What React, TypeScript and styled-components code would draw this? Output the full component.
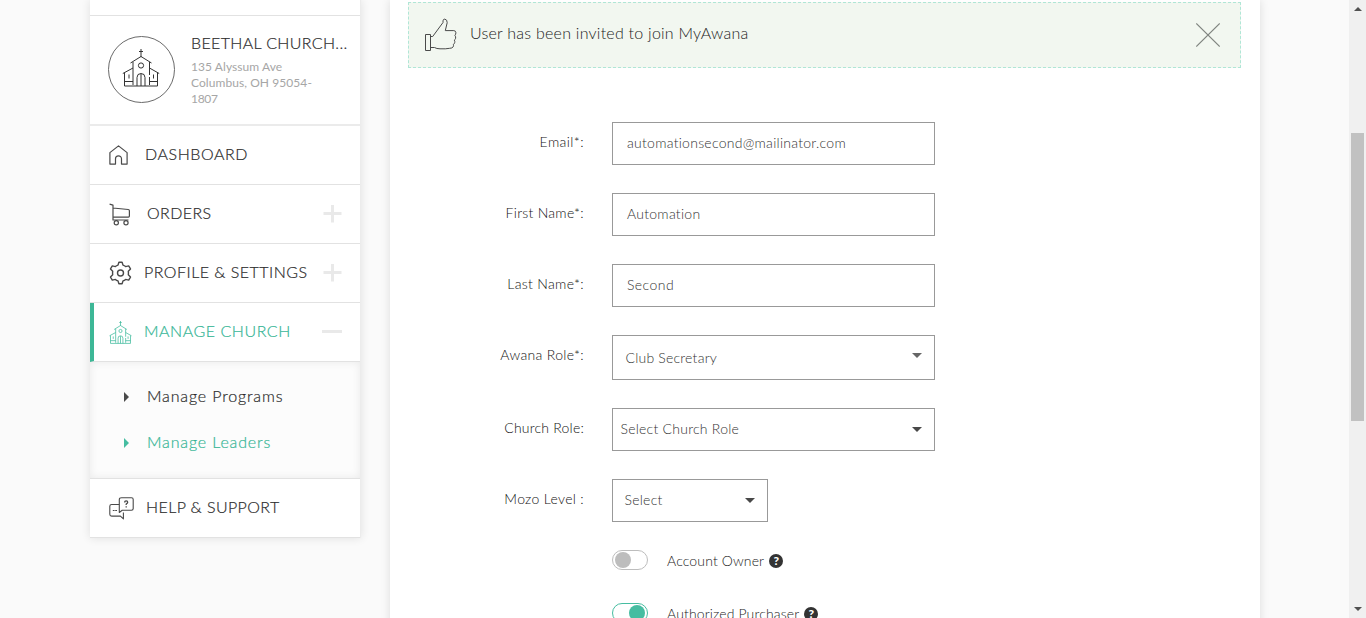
import React from "react";
import styled, { createGlobalStyle } from "styled-components";

const GREEN = "#3db796";
const GREEN_TEXT = "#46bda1";
const DARK = "#4a4a4a";
const INK = "#2c2c2c";

const GlobalStyle = createGlobalStyle`
  *, *::before, *::after { box-sizing: border-box; }
  html, body { margin: 0; padding: 0; overflow: hidden; }
  body { font-family: Lato, "Open Sans", sans-serif; font-weight: 300; background: #fafafa; }
`;

const Page = styled.div`
  display: flex;
  height: 618px;
  overflow: hidden;
  background: #fafafa;
`;

const Content = styled.div`
  flex: 1;
  display: flex;
  align-items: flex-start;
  gap: 29px;
  padding-left: 90px;
`;

const Sidebar = styled.aside`
  width: 271px;
  background: #fff;
  border-right: 1px solid #ececec;
  box-shadow: 0 0 9px rgba(0, 0, 0, 0.11);
`;

const SidebarTop = styled.div`
  height: 16px;
  border-bottom: 1px solid #e2e2e2;
`;

const ChurchCard = styled.div`
  display: flex;
  gap: 16px;
  height: 110px;
  padding: 20px 0 0 18px;
  border-bottom: 2px solid #ebebeb;
`;

const ChurchBadge = styled.div`
  display: flex;
  align-items: center;
  justify-content: center;
  width: 67px;
  height: 67px;
  padding: 0 1px 3px 0;
  border: 1px solid #6a6a6a;
  border-radius: 50%;
  color: #333;
`;

const ChurchInfo = styled.div`
  display: flex;
  flex-direction: column;
`;

const ChurchName = styled.div`
  height: 23px;
  font-size: 16px;
  line-height: 14px;
  letter-spacing: 0.34px;
  color: ${INK};
  -webkit-text-stroke: 0.2px currentColor;
  white-space: nowrap;
`;

const AddressLine = styled.div<{ $spacing?: number }>`
  font-size: 12px;
  font-weight: 400;
  line-height: 16px;
  letter-spacing: ${(p) => p.$spacing ?? 0.07}px;
  color: #a6a6a6;
  white-space: nowrap;
`;

const NavItem = styled.div<{ $active?: boolean }>`
  display: flex;
  align-items: center;
  height: 59px;
  padding-right: 18px;
  padding-left: ${(p) => (p.$active ? 15 : 19)}px;
  border-left: ${(p) => (p.$active ? `4px solid ${GREEN}` : "none")};
  border-bottom: 1px solid #e2e2e2;
  color: ${(p) => (p.$active ? GREEN_TEXT : DARK)};
`;

const NavIcon = styled.span<{ $width: number }>`
  display: flex;
  flex: none;
  width: ${(p) => p.$width}px;
`;

const NavLabel = styled.span<{ $spacing: number; $active?: boolean }>`
  flex: 1;
  padding-bottom: 2px;
  font-size: 16px;
  line-height: 20px;
  letter-spacing: ${(p) => p.$spacing}px;
  color: ${(p) => (p.$active ? "#35b595" : INK)};
  -webkit-text-stroke: 0.2px currentColor;
  white-space: nowrap;
`;

const SubMenu = styled.div`
  height: 117px;
  padding: 11px 0 0 34px;
  background: #fcfcfc;
  border-bottom: 1px solid #e2e2e2;
  box-shadow: inset 0 0 8px rgba(0, 0, 0, 0.08);
`;

const SubItem = styled.div<{ $active?: boolean; $spacing: number }>`
  display: flex;
  align-items: center;
  gap: 18px;
  height: 46px;
  font-size: 16px;
  letter-spacing: ${(p) => p.$spacing}px;
  color: ${(p) => (p.$active ? "#35b595" : INK)};
`;

const Triangle = styled.span<{ $active?: boolean }>`
  width: 0;
  height: 0;
  margin-top: 2px;
  border-left: 5px solid ${(p) => (p.$active ? GREEN_TEXT : DARK)};
  border-top: 5px solid transparent;
  border-bottom: 5px solid transparent;
`;

const SubText = styled.span`
  line-height: 20px;
  -webkit-text-stroke: 0.2px currentColor;
`;

const Panel = styled.main`
  width: 870px;
  height: 640px;
  padding: 2px 19px 0 18px;
  background: #fff;
  box-shadow: 0 0 9px rgba(0, 0, 0, 0.12);
`;

const Alert = styled.div`
  display: flex;
  align-items: center;
  height: 66px;
  padding: 0 20px 0 15px;
  border: 1px dashed #b0e6d6;
  background: #f2f7f0;
`;

const AlertText = styled.div`
  flex: 1;
  padding: 0 0 4px 13px;
  font-size: 16px;
  line-height: 20px;
  letter-spacing: 0.25px;
  color: #222;
`;

const Form = styled.form`
  display: flex;
  flex-direction: column;
  gap: 28px;
  padding-top: 54px;
`;

const Row = styled.div`
  display: flex;
`;

const Label = styled.label<{ $spacing: number }>`
  width: 176px;
  margin-right: 28px;
  padding-top: 10px;
  font-size: 14px;
  line-height: 20px;
  letter-spacing: ${(p) => p.$spacing}px;
  text-align: right;
  color: #111;
`;

const Field = styled.div<{ $width?: number; $height?: number; $inset?: number; $spacing?: number }>`
  display: flex;
  align-items: center;
  justify-content: space-between;
  width: ${(p) => p.$width ?? 323}px;
  height: ${(p) => p.$height ?? 43}px;
  padding: 0 13px 0 ${(p) => p.$inset ?? 14}px;
  border: 1px solid #999;
  font-size: 14px;
  line-height: 20px;
  letter-spacing: ${(p) => p.$spacing ?? 0.27}px;
  color: #333;
`;

const Value = styled.span<{ $low?: boolean }>`
  padding-bottom: ${(p) => (p.$low ? 0 : 2)}px;
`;

const Caret = styled.span<{ $raised?: boolean }>`
  width: 0;
  height: 0;
  margin-right: ${(p) => (p.$raised ? -1 : -0.5)}px;
  margin-bottom: ${(p) => (p.$raised ? 4 : 0)}px;
  border-top: 5px solid ${(p) => (p.$raised ? "#666" : "#484848")};
  border-left: 5px solid transparent;
  border-right: 5px solid transparent;
`;

const ToggleRow = styled.div`
  display: flex;
  align-items: center;
  height: 20px;
  margin-bottom: 5px;
  padding-left: 204px;
`;

const Switch = styled.span<{ $on?: boolean }>`
  display: flex;
  align-items: center;
  justify-content: ${(p) => (p.$on ? "flex-end" : "flex-start")};
  width: 36px;
  height: 20px;
  padding: 0 2px;
  border: 1px solid ${(p) => (p.$on ? GREEN_TEXT : "#bdbdbd")};
  border-radius: 10px;
`;

const Knob = styled.span<{ $on?: boolean }>`
  width: 16px;
  height: 16px;
  border-radius: 50%;
  background: ${(p) => (p.$on ? GREEN_TEXT : "#bdbdbd")};
`;

const ToggleLabel = styled.span`
  margin: 2px 5px 0 19px;
  font-size: 14px;
  line-height: 20px;
  letter-spacing: 0.14px;
  color: #1a1a1a;
`;

const HelpDot = styled.span`
  width: 14px;
  height: 14px;
  margin-top: 2px;
  border-radius: 50%;
  background: #333;
  color: #fff;
  font: 900 12px/14px Lato, sans-serif;
  text-align: center;
`;

const ScrollTrack = styled.div`
  display: flex;
  flex-direction: column;
  align-items: center;
  width: 17px;
  height: 618px;
  padding: 7px 0;
  background: #f0f0f0;
`;

const ScrollArrow = styled.span<{ $down?: boolean }>`
  width: 0;
  height: 0;
  border-left: 4px solid transparent;
  border-right: 4px solid transparent;
  border-bottom: ${(p) => (p.$down ? "none" : "4px solid #505050")};
  border-top: ${(p) => (p.$down ? "4px solid #505050" : "none")};
  margin-top: ${(p) => (p.$down ? "auto" : "0")};
`;

const ScrollThumb = styled.div`
  width: 13px;
  height: 288px;
  margin-top: 122px;
  background: #c1c1c1;
`;

const ChurchIcon = ({ size, stroke }: { size: number; stroke: number }) => (
  <svg width={size} height={size} viewBox="0 0 38 38" fill="none" stroke="currentColor" strokeWidth={stroke}>
    <path d="M19 0v8M17 2.500h4" />
    <path d="M8.500 14 19 7.500 29.500 14" />
    <path d="M11 13v23M27.500 13v13M27.500 28v8" />
    <path d="M11 19 .8 24.500M27.500 19 37.200 24.500" />
    <path d="M2.500 24v13h33V24M2.500 32.500H11M27.500 32.500h8" />
    <circle cx="19" cy="16.500" r="2.600" />
    <path d="M15 37V28.500a4 4 0 0 1 8 0V37M19 25v12M7 25.500v4M31.500 25.500v4" />
  </svg>
);

const HomeIcon = () => (
  <svg width="19" height="20" viewBox="0 0 19 20" fill="none" stroke="currentColor" strokeWidth="1.200">
    <path d="M.9 7.600 9.500.9l8.600 6.700v11.500h-5.600v-5.300a3 3 0 0 0-6 0v5.300H.9z" strokeLinejoin="round" />
  </svg>
);

const CartIcon = () => (
  <svg width="22" height="23" viewBox="0 0 22 23" fill="none" stroke="currentColor" strokeWidth="1.200">
    <path d="M.6 1.200 4 2.200V17h15.500M4 5l15.200 1.500q1.200.1 1.200 1.300v5.300q0 1-1 1H4" strokeLinejoin="round" />
    <circle cx="7.300" cy="19.800" r="2.100" />
    <circle cx="17" cy="19.800" r="2.100" />
  </svg>
);

const GearIcon = () => (
  <svg width="24" height="24" viewBox="0 0 24 24" fill="none" stroke="currentColor" strokeWidth="1.400" strokeLinejoin="round">
    <path d="M9.900 1.200h3.200l.9 2.900q1.500.5 2.600 1.500l3.100-.7 1.800 3-2.200 2.300q.3 1.800 0 3.600l2.200 2.300-1.800 3-3.100-.7q-1.100 1-2.600 1.500l-.9 2.900H9.900L9 19.900q-1.500-.5-2.600-1.500l-3.100.7-1.800-3 2.200-2.300q-.3-1.800 0-3.600L1.500 7.900l1.800-3 3.100.7Q7.500 4.600 9 4.100z" />
    <circle cx="11.500" cy="12" r="3" />
  </svg>
);

const ChatIcon = () => (
  <svg width="25" height="23" viewBox="0 0 25 23" fill="none" stroke="currentColor" strokeWidth="1.100" strokeLinejoin="round">
    <path d="M12.500.8h10q1.700 0 1.700 1.700v9q0 1.700-1.700 1.700h-9.300l-2.900 2.300V2.500q0-1.700 2.200-1.700z" />
    <path d="M10.300 7.500H2.600q-1.800 0-1.800 1.800v8q0 1.800 1.800 1.800h8.800l3 2.800v-6.500" />
    <path d="M3.800 13.500h1.800M6.200 13.500H8" />
    <path d="M15.700 5.500q0-1.600 1.500-1.600t1.500 1.400q0 .9-1.500 1.700v1M17.200 9.200v1.200" strokeWidth="1.300" />
  </svg>
);

const ThumbIcon = () => (
  <svg width="33" height="34" viewBox="0 0 33 34" fill="none" stroke="#4a4a4a" strokeWidth="1" strokeLinejoin="round">
    <path d="M1.500 16.500h5v16h-5z" />
    <path d="M6.500 18.500h2.200L19 4.500V2.800q.2-1.700 1.800-1.700 2.400.4 2.400 3.600l-1.900 7.900h8.500q2.100.2 2.100 2.100 0 1.600-1 2.700 1.100 1.400.7 2.900-.2 1.300-1.300 1.800.8 1.300.4 2.600-.3 1.200-1.400 1.800.5 1.200-.1 2.300-1 1.500-3.500 1.500-4 .8-9.700.5-3.500 0-5.500-1.300h-4" />
  </svg>
);

const CloseIcon = () => (
  <svg width="24" height="24" viewBox="0 0 24 24" stroke="#808580" strokeWidth="1.100">
    <path d="M.3.500l23.400 23M23.700.5.300 23.500" />
  </svg>
);

const Expander = ({ open }: { open?: boolean }) => (
  <svg width="20" height="20" viewBox="0 0 20 20" stroke="#e9e9e9" strokeWidth="3">
    <path d={open ? "M0 9.500h20" : "M1.500 9.500h18M10.500 1v17.500"} />
  </svg>
);

export default function App() {
  return (
    <Page>
      <GlobalStyle />
      <Content>
        <Sidebar>
          <SidebarTop />
          <ChurchCard>
            <ChurchBadge>
              <ChurchIcon size={38} stroke={1} />
            </ChurchBadge>
            <ChurchInfo>
              <ChurchName>BEETHAL CHURCH...</ChurchName>
              <AddressLine>135 Alyssum Ave</AddressLine>
              <AddressLine>Columbus, OH 95054-</AddressLine>
              <AddressLine $spacing={-0.3}>1807</AddressLine>
            </ChurchInfo>
          </ChurchCard>
          <NavItem>
            <NavIcon $width={36}><HomeIcon /></NavIcon>
            <NavLabel $spacing={0.57}>DASHBOARD</NavLabel>
          </NavItem>
          <NavItem>
            <NavIcon $width={38}><CartIcon /></NavIcon>
            <NavLabel $spacing={0.4}>ORDERS</NavLabel>
            <Expander />
          </NavItem>
          <NavItem>
            <NavIcon $width={35}><GearIcon /></NavIcon>
            <NavLabel $spacing={0.48}>PROFILE &amp; SETTINGS</NavLabel>
            <Expander />
          </NavItem>
          <NavItem $active>
            <NavIcon $width={35}><ChurchIcon size={23} stroke={1.3} /></NavIcon>
            <NavLabel $active $spacing={0.54}>MANAGE CHURCH</NavLabel>
            <Expander open />
          </NavItem>
          <SubMenu>
            <SubItem $spacing={0.85}>
              <Triangle />
              <SubText>Manage Programs</SubText>
            </SubItem>
            <SubItem $active $spacing={0.85}>
              <Triangle $active />
              <SubText>Manage Leaders</SubText>
            </SubItem>
          </SubMenu>
          <NavItem>
            <NavIcon $width={37}><ChatIcon /></NavIcon>
            <NavLabel $spacing={0.4}>HELP &amp; SUPPORT</NavLabel>
          </NavItem>
        </Sidebar>
        <Panel>
          <Alert>
            <ThumbIcon />
            <AlertText>User has been invited to join MyAwana</AlertText>
            <CloseIcon />
          </Alert>
          <Form>
            <Row>
              <Label $spacing={0.42}>Email*:</Label>
              <Field><Value>automationsecond@mailinator.com</Value></Field>
            </Row>
            <Row>
              <Label $spacing={0.28}>First Name*:</Label>
              <Field><Value>Automation</Value></Field>
            </Row>
            <Row>
              <Label $spacing={0.34}>Last Name*:</Label>
              <Field $spacing={0.45}><Value>Second</Value></Field>
            </Row>
            <Row>
              <Label $spacing={0.33}>Awana Role*:</Label>
              <Field $height={45} $inset={12.5} $spacing={0.22}>
                <Value $low>Club Secretary</Value>
                <Caret $raised />
              </Field>
            </Row>
            <Row>
              <Label $spacing={0.22}>Church Role:</Label>
              <Field $inset={7.5} $spacing={0.25}>
                <Value>Select Church Role</Value>
                <Caret />
              </Field>
            </Row>
            <Row>
              <Label $spacing={0.32}>Mozo Level :</Label>
              <Field $width={156} $inset={11.5}>
                <Value>Select</Value>
                <Caret />
              </Field>
            </Row>
            <ToggleRow>
              <Switch><Knob /></Switch>
              <ToggleLabel>Account Owner</ToggleLabel>
              <HelpDot>?</HelpDot>
            </ToggleRow>
            <ToggleRow>
              <Switch $on><Knob $on /></Switch>
              <ToggleLabel>Authorized Purchaser</ToggleLabel>
              <HelpDot>?</HelpDot>
            </ToggleRow>
          </Form>
        </Panel>
      </Content>
      <ScrollTrack>
        <ScrollArrow />
        <ScrollThumb />
        <ScrollArrow $down />
      </ScrollTrack>
    </Page>
  );
}
